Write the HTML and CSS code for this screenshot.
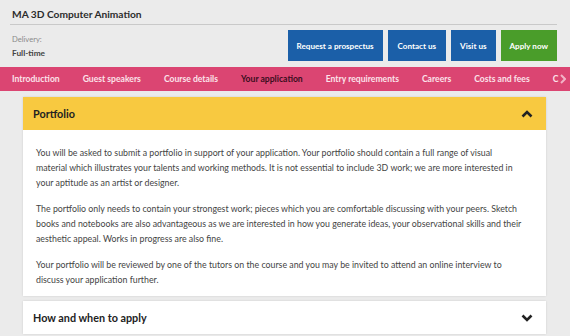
FILE: index.html
```html
<!DOCTYPE html>
<html>
<head>
<meta charset="utf-8">
<link rel="stylesheet" href="styles.css">
</head>
<body>
<header class="course-head">
  <h1 class="title">MA 3D Computer Animation</h1>
  <div class="meta-row">
    <div class="delivery">
      <div class="label">Delivery:</div>
      <div class="value">Full-time</div>
    </div>
    <div class="actions">
      <a class="btn blue">Request a prospectus</a>
      <a class="btn blue">Contact us</a>
      <a class="btn blue">Visit us</a>
      <a class="btn green">Apply now</a>
    </div>
  </div>
</header>
<nav class="tabs">
  <span class="tab">Introduction</span>
  <span class="tab">Guest speakers</span>
  <span class="tab">Course details</span>
  <span class="tab active">Your application</span>
  <span class="tab">Entry requirements</span>
  <span class="tab">Careers</span>
  <span class="tab">Costs and fees</span>
  <span class="tab last">C</span>
  <svg class="more" width="6" height="10" viewBox="0 0 6 10"><path d="M1 1 L5 5 L1 9" fill="none" stroke="#f2b3c6" stroke-width="2"/></svg>
</nav>
<main class="content">
  <section class="panel open">
    <div class="panel-head">
      <span>Portfolio</span>
      <svg width="12" height="8" viewBox="0 0 12 8"><path d="M1.5 6.5 L6 2 L10.5 6.5" fill="none" stroke="#222" stroke-width="2.6"/></svg>
    </div>
    <div class="panel-body">
      <p>You will be asked to submit a portfolio in support of your application. Your portfolio should contain a full range of visual material which illustrates your talents and working methods. It is not essential to include 3D work; we are more interested in your aptitude as an artist or designer.</p>
      <p>The portfolio only needs to contain your strongest work; pieces which you are comfortable discussing with your peers. Sketch books and notebooks are also advantageous as we are interested in how you generate ideas, your observational skills and their aesthetic appeal. Works in progress are also fine.</p>
      <p>Your portfolio will be reviewed by one of the tutors on the course and you may be invited to attend an online interview to discuss your application further.</p>
    </div>
  </section>
  <section class="panel">
    <div class="panel-head">
      <span>How and when to apply</span>
      <svg width="12" height="8" viewBox="0 0 12 8"><path d="M1.5 1.5 L6 6 L10.5 1.5" fill="none" stroke="#222" stroke-width="2.6"/></svg>
    </div>
  </section>
</main>
</body>
</html>
```
FILE: styles.css
```css
* { box-sizing: border-box; }
html, body { margin: 0; padding: 0; }
body {
  width: 570px;
  height: 336px;
  overflow: hidden;
  background: #ebebeb;
  font-family: Lato, "Liberation Sans", sans-serif;
  color: #333;
}
.course-head {
  margin: 0 13px 0 10px;
}
.title {
  margin: 0;
  padding: 8px 2px 0;
  height: 25px;
  font-size: 10.2px;
  font-weight: 700;
  color: #2b2b2b;
  border-bottom: 1px solid #c9c9c9;
}
.meta-row {
  display: flex;
  justify-content: space-between;
  align-items: flex-start;
  padding-top: 5px;
}
.delivery { padding: 4px 2px 0; }
.label { font-size: 7.6px; color: #8a8a8a; }
.value { font-size: 8.3px; font-weight: 700; color: #444; margin-top: 4px; }
.actions { display: flex; gap: 5px; }
.btn {
  display: flex;
  align-items: center;
  justify-content: center;
  height: 31px;
  padding: 0 9px;
  font-size: 8.1px;
  font-weight: 700;
  color: #fff;
}
.btn:nth-child(2) { padding: 0 10px; }
.blue { background: #1b5fa8; }
.green { background: #4a9d2a; }
.tabs {
  margin-top: 6px;
  height: 24px;
  background: #db4572;
  display: flex;
  align-items: center;
  padding-left: 12px;
  gap: 23px;
  white-space: nowrap;
  overflow: hidden;
}
.tab { font-size: 8.6px; font-weight: 700; color: #fce3ea; }
.tab.active { color: #3a0d1d; }
.more { margin-left: -21px; flex: none; }
.content { padding: 6px 24px 0 23px; }
.panel { background: #fff; box-shadow: 0 0 2px rgba(0,0,0,0.12); margin-bottom: 5px; }
.panel-head {
  height: 33px;
  display: flex;
  align-items: center;
  justify-content: space-between;
  padding: 0 13px 0 10px;
  font-size: 10.8px;
  font-weight: 700;
  color: #222;
}
.open .panel-head { background: #f8c940; }
.panel-body { padding: 15px 21px 9px 13px; }
.panel-body p {
  margin: 0 0 11px;
  font-size: 8.8px;
  line-height: 15px;
  color: #444;
}
.panel-body p:last-child { margin-bottom: 0; }
```
